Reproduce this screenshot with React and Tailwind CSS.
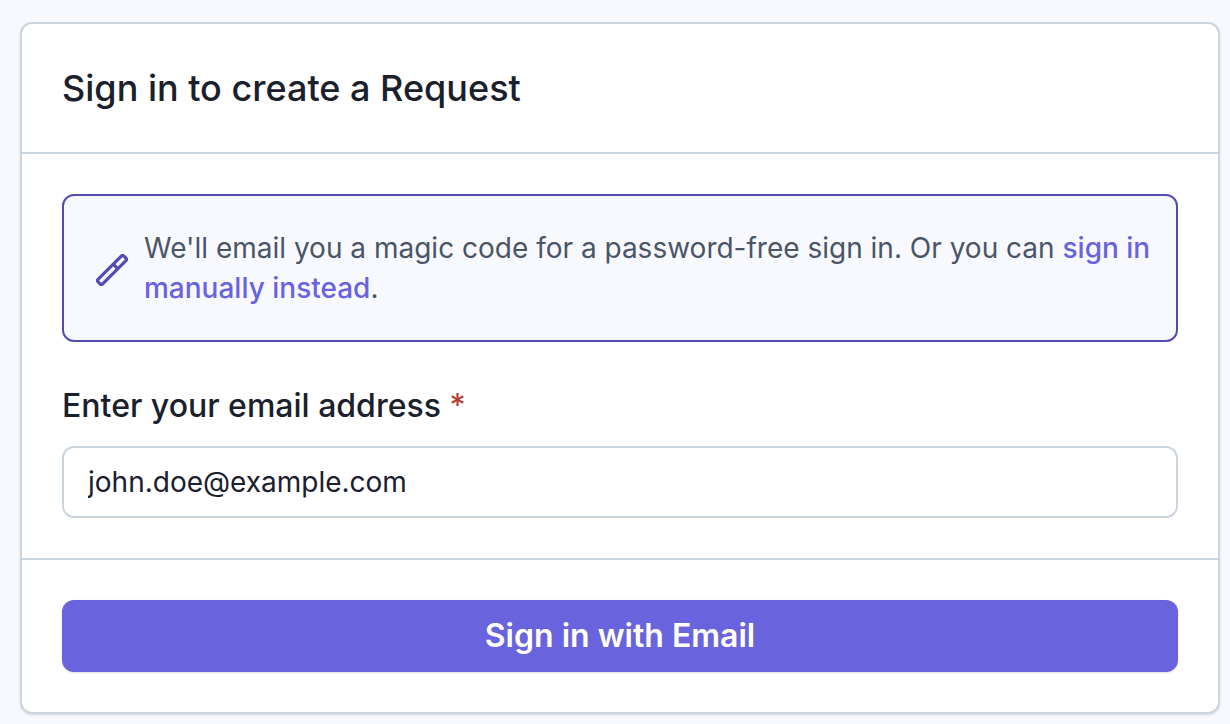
import { useState } from 'react'

function WandIcon() {
  return (
    <svg
      className="mt-1 size-8 shrink-0 text-[#544bb0]"
      fill="none"
      stroke="currentColor"
      strokeWidth={3.2}
      strokeLinejoin="round"
      viewBox="0 0 32 32"
      aria-hidden="true"
    >
      <g transform="translate(16 16) rotate(-45)">
        <rect x="-18.3" y="-3.3" width="36.6" height="6.6" rx="2.2" />
        <path d="M5-3.3v6.6" />
      </g>
    </svg>
  )
}

export default function App() {
  const [email, setEmail] = useState('john.doe@example.com')

  return (
    <main className="min-h-screen bg-[#f8f9fe] pt-[22px] pr-2.5 pb-2.5 pl-5 font-['Inter',sans-serif] text-[#1a202c]">
      <form
        className="rounded-xl border-2 border-[#cbd5e0] bg-white shadow-sm"
        onSubmit={(e) => e.preventDefault()}
      >
        <header className="border-b-2 border-[#cbd5e0] p-10">
          <h1 className="text-[36px] leading-12 font-medium">Sign in to create a Request</h1>
        </header>

        <div className="p-10">
          <div className="flex items-center gap-4 rounded-xl border-2 border-[#544bb0] bg-[#f8f9fe] py-8 pr-5 pl-8">
            <WandIcon />
            <p className="text-[28px] leading-10 text-[#4a5568]">
              We'll email you a magic code for a password-free sign in. Or you can{' '}
              <a href="#manual" className="font-medium text-[#6963de]">
                sign in manually instead
              </a>
              .
            </p>
          </div>

          <label htmlFor="email" className="mt-10 block text-[32px] leading-12 font-medium">
            Enter your email address <span className="font-normal text-[#b83a32]">*</span>
          </label>
          <input
            id="email"
            type="email"
            required
            value={email}
            onChange={(e) => setEmail(e.target.value)}
            className="mt-4 block h-18 w-full rounded-xl border-2 border-[#cbd5e0] bg-white px-6 text-[28px]"
          />
        </div>

        <footer className="border-t-2 border-[#cbd5e0] p-10">
          <button
            type="submit"
            className="block h-18 w-full rounded-xl bg-[#6963de] text-[32px] leading-12 font-semibold text-white shadow-sm"
          >
            Sign in with Email
          </button>
        </footer>
      </form>
    </main>
  )
}
